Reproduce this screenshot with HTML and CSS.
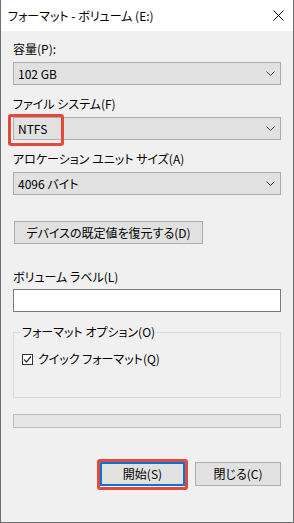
FILE: index.html
```html
<!DOCTYPE html>
<html lang="ja">
<head>
  <meta charset="UTF-8" />
  <title>フォーマット - ボリューム (E:)</title>
  <link rel="stylesheet" href="styles.css">
</head>
<body>
  <div class="window">
    <div class="titlebar">
      <span class="title">フォーマット - ボリューム (E:)</span>
      <svg class="close" width="11" height="11" viewBox="0 0 11 11">
        <path d="M0.5 0.5L10.5 10.5M10.5 0.5L0.5 10.5" stroke="#000" stroke-width="1" fill="none"/>
      </svg>
    </div>

    <div class="content">
      <div class="label">容量(P):</div>
      <div class="combo">
        <span>102 GB</span>
        <svg class="chev" width="9" height="5" viewBox="0 0 9 5"><path d="M0.5 0.5L4.5 4.5L8.5 0.5" stroke="#444" fill="none"/></svg>
      </div>

      <div class="label">ファイル システム(F)</div>
      <div class="combo">
        <span>NTFS</span>
        <svg class="chev" width="9" height="5" viewBox="0 0 9 5"><path d="M0.5 0.5L4.5 4.5L8.5 0.5" stroke="#444" fill="none"/></svg>
        <!-- annotation box -->
        <div class="mark mark-fs"></div>
      </div>

      <div class="label">アロケーション ユニット サイズ(A)</div>
      <div class="combo">
        <span>4096 バイト</span>
        <svg class="chev" width="9" height="5" viewBox="0 0 9 5"><path d="M0.5 0.5L4.5 4.5L8.5 0.5" stroke="#444" fill="none"/></svg>
      </div>

      <button class="btn btn-restore">デバイスの既定値を復元する(D)</button>

      <div class="label label-vol">ボリューム ラベル(L)</div>
      <div class="textbox"></div>

      <fieldset class="group">
        <legend>フォーマット オプション(O)</legend>
        <div class="check-row">
          <span class="check">
            <svg width="9" height="9" viewBox="0 0 9 9"><path d="M1 4.5L3.5 7L8 1.5" stroke="#333" stroke-width="1.2" fill="none"/></svg>
          </span>
          クイック フォーマット(Q)
        </div>
      </fieldset>

      <div class="progress"></div>

      <div class="actions">
        <div class="btn-wrap">
          <button class="btn btn-default">開始(S)</button>
          <div class="mark mark-start"></div>
        </div>
        <button class="btn btn-close">閉じる(C)</button>
      </div>
    </div>
  </div>
</body>
</html>
```

FILE: styles.css
```css
body {
  margin: 0;
  font-family: "Noto Sans CJK JP", sans-serif;
  font-size: 12px;
  font-feature-settings: "palt" 1;
  color: #000;
}
.window {
  width: 294px;
  height: 523px;
  box-sizing: border-box;
  border: 1px solid #6e6e6e;
  border-top: none;
  background: #f0f0f0;
  display: flex;
  flex-direction: column;
}
.titlebar {
  height: 31px;
  flex: none;
  background: #fff;
  display: flex;
  align-items: center;
  justify-content: space-between;
  padding: 0 9px 0 7px;
}
.title {
  line-height: 16px;
}
.content {
  padding: 10px 12px 0;
  display: flex;
  flex-direction: column;
}
.label {
  line-height: 16px;
  margin-bottom: 5px;
}
.combo {
  position: relative;
  height: 23px;
  box-sizing: border-box;
  border: 1px solid #adadad;
  background: #e1e1e1;
  display: flex;
  align-items: center;
  justify-content: space-between;
  padding: 0 5px 0 4px;
  margin-bottom: 11px;
  line-height: 16px;
}
.mark {
  position: absolute;
  border: 3px solid #e5483d;
  border-radius: 3px;
  box-sizing: border-box;
}
.mark-fs {
  left: -6px;
  top: -4px;
  width: 56px;
  height: 32px;
}
.btn {
  font: inherit;
  font-feature-settings: "palt" 1;
  color: #000;
  background: #e1e1e1;
  border: 1px solid #adadad;
  box-sizing: border-box;
  height: 24px;
  padding: 0;
  line-height: 16px;
}
.btn-restore {
  align-self: flex-start;
  width: 189px;
  height: 23px;
  margin: 15px 0 0 1px;
}
.label-vol {
  margin-top: 25px;
  margin-bottom: 4px;
}
.textbox {
  height: 23px;
  box-sizing: border-box;
  border: 1px solid #7a7a7a;
  background: #fff;
}
.group {
  margin: 12px 0 0;
  height: 74px;
  box-sizing: border-box;
  border: 1px solid #dcdcdc;
  padding: 11px 8px 0 7px;
  min-width: 0;
}
.group legend {
  padding: 0 1px;
  line-height: 16px;
}
.check-row {
  display: flex;
  align-items: center;
  gap: 5px;
  line-height: 16px;
  padding-left: 1px;
}
.check {
  width: 11px;
  height: 11px;
  box-sizing: border-box;
  border: 1px solid #333;
  background: #fff;
  display: flex;
  align-items: center;
  justify-content: center;
}
.progress {
  margin-top: 16px;
  height: 14px;
  box-sizing: border-box;
  border: 1px solid #bcbcbc;
  background: #e6e6e6;
}
.actions {
  margin-top: 34px;
  display: flex;
  justify-content: flex-end;
  gap: 10px;
}
.btn-wrap {
  position: relative;
}
.btn-default {
  width: 85px;
  border: 2px solid #0078d7;
  display: block;
}
.mark-start {
  left: -3px;
  top: -3px;
  width: 91px;
  height: 31px;
}
.btn-close {
  width: 86px;
}
```
